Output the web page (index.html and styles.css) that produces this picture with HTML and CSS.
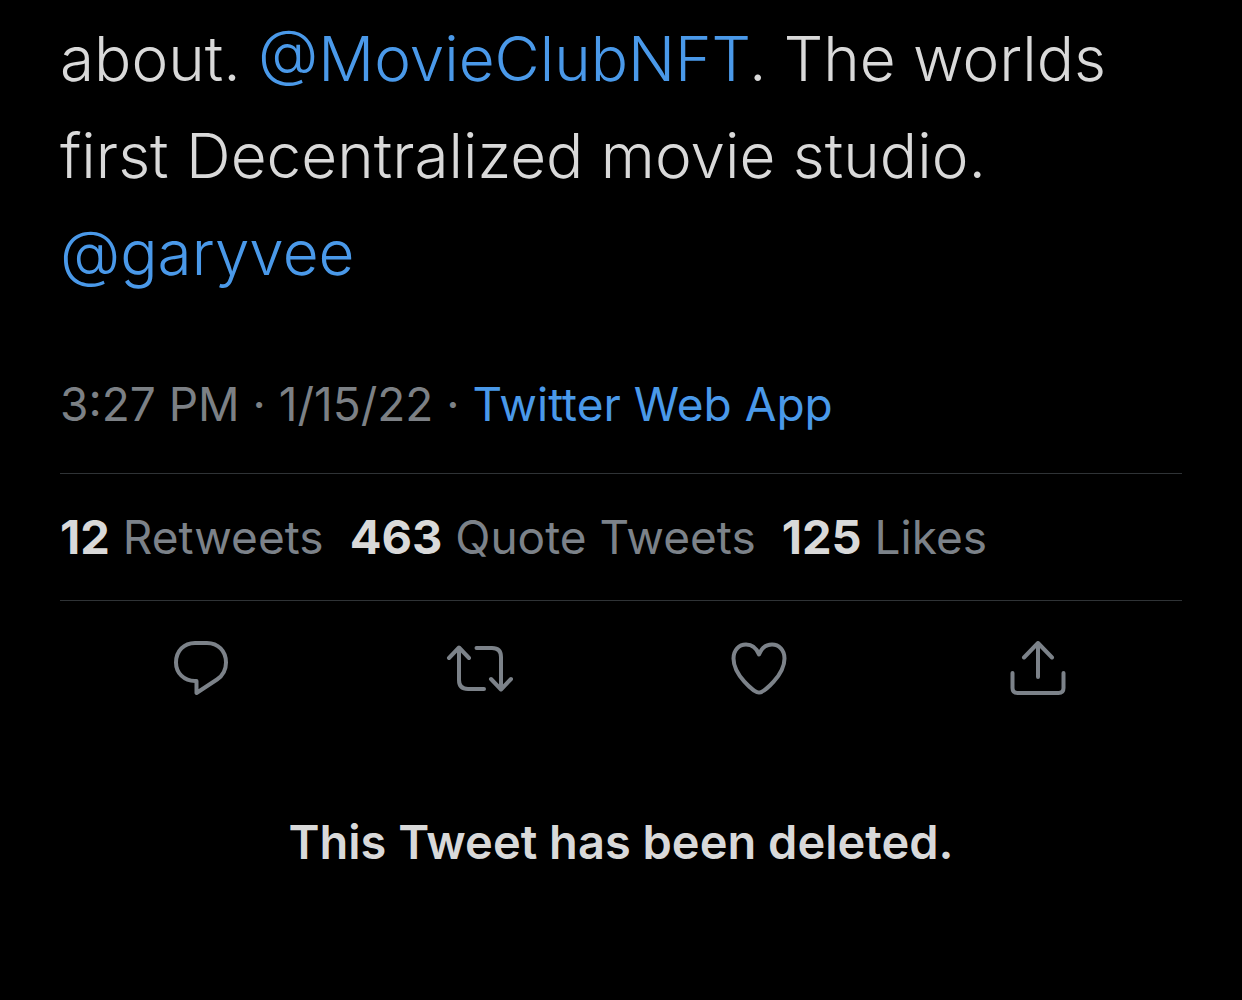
FILE: index.html
```html
<!DOCTYPE html>
<html lang="en">
  <head>
    <meta charset="utf-8">
    <title>Tweet</title>
    <link rel="stylesheet" href="styles.css">
  </head>
  <body>
    <article class="tweet">
      <p class="tweet-text">
        about. <a href="#">@MovieClubNFT</a>. The worlds<br>
        first Decentralized movie studio.<br>
        <a href="#">@garyvee</a>
      </p>

      <div class="meta">3:27 PM · 1/15/22 · <a href="#">Twitter Web App</a></div>

      <div class="stats">
        <span><b>12</b> Retweets</span>
        <span><b>463</b> Quote Tweets</span>
        <span><b>125</b> Likes</span>
      </div>

      <div class="actions">
        <button class="action" aria-label="Reply">
          <svg viewBox="0 0 72 72">
            <path d="M31.5 50H30C19 50 11 42 11 31.5C11 20 19 12 30 12H42C53 12 61 20 61 31.5C61 39 58 44.5 52 48.5L31.5 62V50Z"/>
          </svg>
        </button>
        <button class="action" aria-label="Retweet">
          <svg viewBox="0 0 72 72">
            <path d="M5 27L15 16.5L25 27M15 17V49Q15 58 24 58H40M47 48L57 58.5L67 48M57 58V26Q57 17 48 17H32.5"/>
          </svg>
        </button>
        <button class="action" aria-label="Like">
          <svg viewBox="0 0 72 72">
            <path d="M36 61.5C31 61.5 10.5 44 10.5 27.5C10.5 19 16 13.5 23 13.5C29 13.5 33.5 17 36 23.5C38.5 17 43 13.5 49 13.5C56 13.5 61.5 19 61.5 27.5C61.5 44 41 61.5 36 61.5Z"/>
          </svg>
        </button>
        <button class="action" aria-label="Share">
          <svg viewBox="0 0 72 72">
            <path d="M36 46V12M22 26.5L36 12L50 26.5M10.5 42V57Q10.5 62 15.5 62H56.5Q61.5 62 61.5 57V42"/>
          </svg>
        </button>
      </div>
    </article>

    <p class="notice">This Tweet has been deleted.</p>
  </body>
</html>
```
FILE: styles.css
```css
body {
  margin: 0;
  background: #000;
  color: #d9d9d9;
  font-family: Inter, "Liberation Sans", sans-serif;
}

a {
  color: #4a99e9;
  text-decoration: none;
}

.tweet {
  padding: 10px 60px 0;
}

.tweet-text {
  margin: 0;
  font-size: 62px;
  font-weight: 300;
  line-height: 97px;
}

.meta {
  padding: 68px 0 34px;
  color: #7c8085;
  font-size: 46px;
  line-height: 70px;
}

.stats {
  display: flex;
  gap: 26px;
  padding: 28px 0;
  border-top: 1px solid #2f3336;
  border-bottom: 1px solid #2f3336;
  color: #7c8289;
  font-size: 46px;
  line-height: 70px;
}

.stats b {
  color: #d9d9d9;
  font-size: 47px;
  font-weight: 700;
}

.actions {
  display: flex;
  justify-content: space-between;
  padding: 30px 108px 0 105px;
}

.action {
  display: flex;
  padding: 0;
  border: 0;
  background: none;
  color: #7c8289;
  cursor: pointer;
}

.action svg {
  width: 72px;
  height: 72px;
  fill: none;
  stroke: currentColor;
  stroke-width: 4;
  stroke-linecap: round;
  stroke-linejoin: round;
}

.notice {
  margin: 104px 0 0;
  font-size: 47px;
  font-weight: 600;
  line-height: 70px;
  text-align: center;
}
```
